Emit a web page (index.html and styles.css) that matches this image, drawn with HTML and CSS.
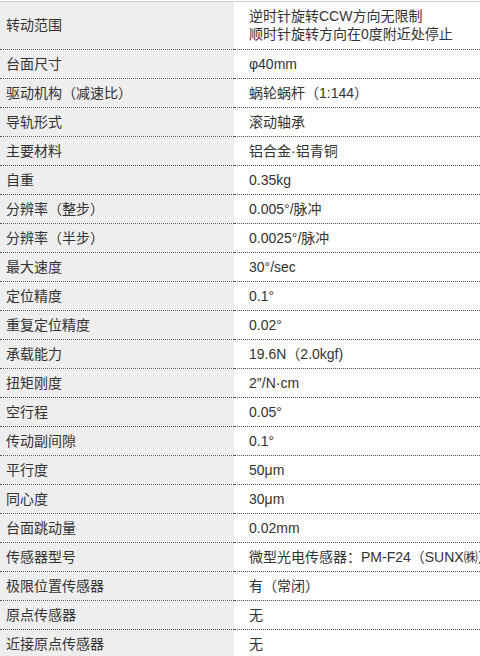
FILE: index.html
```html
<!DOCTYPE html>
<html lang="zh-CN">
<head>
<meta charset="utf-8">
<title>参数</title>
<link rel="stylesheet" href="styles.css">
</head>
<body>
<table class="spec">
<colgroup><col class="c-name"><col class="c-val"></colgroup>
<tbody>
<tr class="tall"><td class="name">转动范围</td><td class="val">逆时针旋转CCW方向无限制<br>顺时针旋转方向在0度附近处停止</td></tr>
<tr><td class="name">台面尺寸</td><td class="val">φ40mm</td></tr>
<tr><td class="name">驱动机构（减速比）</td><td class="val">蜗轮蜗杆（1:144）</td></tr>
<tr><td class="name">导轨形式</td><td class="val">滚动轴承</td></tr>
<tr><td class="name">主要材料</td><td class="val">铝合金·铝青铜</td></tr>
<tr><td class="name">自重</td><td class="val">0.35kg</td></tr>
<tr><td class="name">分辨率（整步）</td><td class="val">0.005°/脉冲</td></tr>
<tr><td class="name">分辨率（半步）</td><td class="val">0.0025°/脉冲</td></tr>
<tr><td class="name">最大速度</td><td class="val">30°/sec</td></tr>
<tr><td class="name">定位精度</td><td class="val">0.1°</td></tr>
<tr><td class="name">重复定位精度</td><td class="val">0.02°</td></tr>
<tr><td class="name">承载能力</td><td class="val">19.6N（2.0kgf)</td></tr>
<tr><td class="name">扭矩刚度</td><td class="val">2″/N·cm</td></tr>
<tr><td class="name">空行程</td><td class="val">0.05°</td></tr>
<tr><td class="name">传动副间隙</td><td class="val">0.1°</td></tr>
<tr><td class="name">平行度</td><td class="val">50μm</td></tr>
<tr><td class="name">同心度</td><td class="val">30μm</td></tr>
<tr><td class="name">台面跳动量</td><td class="val">0.02mm</td></tr>
<tr><td class="name">传感器型号</td><td class="val">微型光电传感器：PM-F24（SUNX㈱）</td></tr>
<tr><td class="name">极限位置传感器</td><td class="val">有（常闭）</td></tr>
<tr><td class="name">原点传感器</td><td class="val">无</td></tr>
<tr><td class="name">近接原点传感器</td><td class="val">无</td></tr>
</tbody>
</table>
</body>
</html>
```
FILE: styles.css
```css
html, body {
  margin: 0;
  padding: 0;
  background: #fff;
  overflow: hidden;
}
body {
  padding-top: 1px;
  font-family: "Liberation Sans", "Noto Sans CJK SC", sans-serif;
  font-size: 14px;
  color: #333;
}
.spec {
  width: 480px;
  table-layout: fixed;
  border-collapse: collapse;
  border-top: 1px solid #cfcfcf;
}
.c-name { width: 234px; }
.c-val { width: 246px; }
.spec td {
  height: 28px;
  padding: 0;
  line-height: 18px;
  vertical-align: middle;
  white-space: nowrap;
  overflow: hidden;
  border-bottom: 1px dotted #555;
  box-sizing: border-box;
}
.spec tr td { height: 29px; }
.spec tr.tall td { height: 48px; padding-top: 5px; padding-bottom: 6px; }
.spec td.name {
  background: #eeeeee;
  padding-left: 6px;
}
.spec td.val {
  padding-left: 15px;
}
```
